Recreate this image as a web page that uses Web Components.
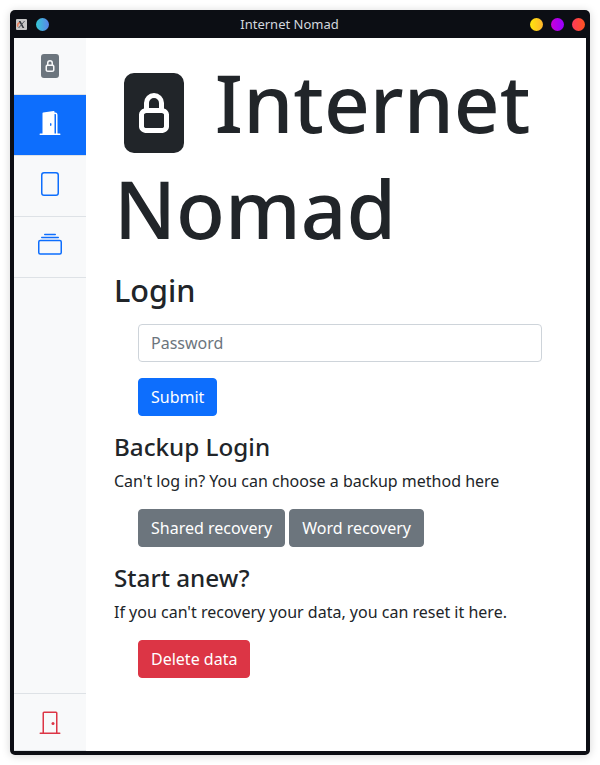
<!DOCTYPE html>
<html lang="en">
<head>
<meta charset="utf-8">
<title>Internet Nomad</title>
<style>
html, body { margin: 0; height: 100%; background: #fff; }
body { font-family: "Noto Sans", "Liberation Sans", sans-serif; font-size: 16px; line-height: 1.5; color: #212529; overflow: hidden; }
</style>
</head>
<body>
<nomad-window label="Internet Nomad">
  <nomad-sidebar slot="side">
    <nav-item kind="brand" icon="lock"></nav-item>
    <nav-item kind="active" icon="open"></nav-item>
    <nav-item icon="file"></nav-item>
    <nav-item icon="collection"></nav-item>
    <nav-item kind="exit" slot="end" icon="closed"></nav-item>
  </nomad-sidebar>
  <nomad-hero><bs-icon slot="icon" name="lock"></bs-icon>Internet Nomad</nomad-hero>
  <form-section size="large" label="Login">
    <password-field label="Password"></password-field>
    <action-button>Submit</action-button>
  </form-section>
  <form-section label="Backup Login" note="Can't log in? You can choose a backup method here">
    <action-button tone="secondary">Shared recovery</action-button>
    <action-button tone="secondary">Word recovery</action-button>
  </form-section>
  <form-section label="Start anew?" note="If you can't recovery your data, you can reset it here.">
    <action-button tone="danger">Delete data</action-button>
  </form-section>
</nomad-window>
<script>
const ICONS = {
  lock: '<path d="M7 6a1 1 0 0 1 2 0v1H7V6zM6 8.3c0-.042.02-.107.105-.175A.637.637 0 0 1 6.5 8h3a.64.64 0 0 1 .395.125c.085.068.105.133.105.175v2.4c0 .042-.02.107-.105.175A.637.637 0 0 1 9.5 11h-3a.637.637 0 0 1-.395-.125C6.02 10.807 6 10.742 6 10.7V8.3z"/><path d="M12 0H4a2 2 0 0 0-2 2v12a2 2 0 0 0 2 2h8a2 2 0 0 0 2-2V2a2 2 0 0 0-2-2zm-2 6v1.076c.54.166 1 .597 1 1.224v2.4c0 .816-.781 1.3-1.5 1.3h-3c-.719 0-1.5-.484-1.5-1.3V8.3c0-.627.46-1.058 1-1.224V6a2 2 0 1 1 4 0z"/>',
  open: '<path d="M1.5 15a.5.5 0 0 0 0 1h13a.5.5 0 0 0 0-1H13V2.5A1.5 1.5 0 0 0 11.5 1H11V.5a.5.5 0 0 0-.57-.495l-7 1A.5.5 0 0 0 3 1.5V15H1.5zM11 2h.5a.5.5 0 0 1 .5.5V15h-1V2zm-2.5 8c-.276 0-.5-.448-.5-1s.224-1 .5-1 .5.448.5 1-.224 1-.5 1z"/>',
  file: '<path d="M4 0a2 2 0 0 0-2 2v12a2 2 0 0 0 2 2h8a2 2 0 0 0 2-2V2a2 2 0 0 0-2-2H4zm0 1h8a1 1 0 0 1 1 1v12a1 1 0 0 1-1 1H4a1 1 0 0 1-1-1V2a1 1 0 0 1 1-1z"/>',
  collection: '<path d="M2.5 3.5a.5.5 0 0 1 0-1h11a.5.5 0 0 1 0 1h-11zm2-2a.5.5 0 0 1 0-1h7a.5.5 0 0 1 0 1h-7zM0 13a1.5 1.5 0 0 0 1.5 1.5h13A1.5 1.5 0 0 0 16 13V6a1.5 1.5 0 0 0-1.5-1.5h-13A1.5 1.5 0 0 0 0 6v7zm1.5.5A.5.5 0 0 1 1 13V6a.5.5 0 0 1 .5-.5h13a.5.5 0 0 1 .5.5v7a.5.5 0 0 1-.5.5h-13z"/>',
  closed: '<path d="M3 2a1 1 0 0 1 1-1h8a1 1 0 0 1 1 1v13h1.5a.5.5 0 0 1 0 1h-13a.5.5 0 0 1 0-1H3V2zm1 13h8V2H4v13z"/><path d="M9 9a1 1 0 1 0 2 0 1 1 0 0 0-2 0z"/>'
};

function define(name, render) {
  customElements.define(name, class extends HTMLElement {
    constructor() { super(); this.attachShadow({ mode: 'open' }); }
    connectedCallback() { this.shadowRoot.innerHTML = render(this); }
  });
}
const attr = (el, n) => el.getAttribute(n) || '';

define('bs-icon', el => `
<style>:host{display:inline-block;width:1em;height:1em;line-height:1}svg{display:block;width:100%;height:100%;fill:currentColor}</style>
<svg viewBox="0 0 16 16">${ICONS[attr(el, 'name')]}</svg>`);

define('nomad-window', el => `
<style>
:host{display:flex;flex-direction:column;box-sizing:border-box;width:580px;height:745px;margin:10px;padding:0 4px 4px;background:#0c0e14;border-radius:5px;box-shadow:0 1px 8px rgba(0,0,0,.17)}
header{display:grid;grid-template-columns:1fr auto 1fr;align-items:center;height:28px;flex:none;font-size:13px;line-height:28px;color:#d3d7de}
header span{margin-right:21px}
.left{display:flex;align-items:center;gap:9px;padding-left:2px}
.right{display:flex;justify-content:flex-end;gap:8px;padding-right:1px}
i{display:block;width:13px;height:13px;border-radius:50%}
.left i{background:linear-gradient(90deg,#36c9d6,#5b83ea)}
.y{background:linear-gradient(90deg,#ffe60c,#ffb52c)}
.p{background:linear-gradient(90deg,#c800d8,#9800ff)}
.r{background:linear-gradient(90deg,#ff3b5c,#ff5420)}
svg{display:block}
.body{display:flex;flex:1;min-height:0;background:#fff}
main{flex:1;padding:16px 28px 0}
</style>
<header>
  <div class="left"><svg width="11" height="11" viewBox="0 0 11 11"><rect width="11" height="11" rx="1" fill="#c6c6c6"/><path d="M4 3.6Q.6 4.4 2 7.8" stroke="#e8825f" stroke-width="1.6" fill="none"/><path d="M2.8 2h1.7l3.8 7H6.6z" fill="#30343b"/><path d="M8.6 2L2.6 9" stroke="#454a52" stroke-width=".9"/></svg><i></i></div>
  <span>${attr(el, 'label')}</span>
  <div class="right"><i class="y"></i><i class="p"></i><i class="r"></i></div>
</header>
<div class="body"><slot name="side"></slot><main><slot></slot></main></div>`);

define('nomad-sidebar', () => `
<style>:host{display:flex;flex-direction:column;width:72px;flex:none;background:#f8f9fa}.end{margin-top:auto;border-top:1px solid #dee2e6}</style>
<slot></slot><div class="end"><slot name="end"></slot></div>`);

define('nav-item', el => `
<style>
:host{display:flex;justify-content:center;box-sizing:border-box;height:61px;padding-top:16px;border-bottom:1px solid #dee2e6;color:#0d6efd;font-size:24px}
:host([kind=brand]){height:57px;color:#6c757d}
:host([kind=active]){background:#0d6efd;background-clip:padding-box;color:#fff}
:host([kind=exit]){height:57px;color:#dc3545}
</style>
<bs-icon name="${attr(el, 'icon')}"></bs-icon>`);

define('nomad-hero', () => `
<style>
:host{display:block}
h1{margin:0 0 16px;font-size:80px;font-weight:500;line-height:96px}
.mark{display:inline-block;padding-bottom:7px;vertical-align:-20px;line-height:0}
</style>
<h1><span class="mark"><slot name="icon"></slot></span> <slot></slot></h1>`);

define('form-section', el => {
  const big = attr(el, 'size') === 'large';
  const note = attr(el, 'note');
  return `
<style>
:host{display:block}
h2{margin:0 0 ${big ? 7.3 : 8}px;font-weight:500;line-height:1.2;font-size:${big ? 30.58 : 24.23}px}
p{margin:0}
.controls{padding:${big ? '8px' : '16px'} 16px 16px 24px;display:flex;flex-wrap:wrap;gap:16px 4px}
</style>
<h2>${attr(el, 'label')}</h2>${note ? `<p>${note}</p>` : ''}
<div class="controls"><slot></slot></div>`;
});

define('password-field', el => `
<style>:host{display:block;width:100%}input{display:block;box-sizing:border-box;width:100%;height:38px;padding:6px 12px;border:1px solid #ced4da;border-radius:4px;background:#fff;font:inherit;color:inherit}input::placeholder{color:#6c757d;opacity:1}</style>
<input type="password" placeholder="${attr(el, 'label')}">`);

define('action-button', () => `
<style>
:host{display:block;--tone:#0d6efd}
:host([tone=secondary]){--tone:#6c757d}
:host([tone=danger]){--tone:#dc3545}
button{display:block;margin:0;padding:6px 12px;border:1px solid var(--tone);border-radius:4px;background:var(--tone);color:#fff;font:inherit}
</style>
<button><slot></slot></button>`);
</script>
</body>
</html>
